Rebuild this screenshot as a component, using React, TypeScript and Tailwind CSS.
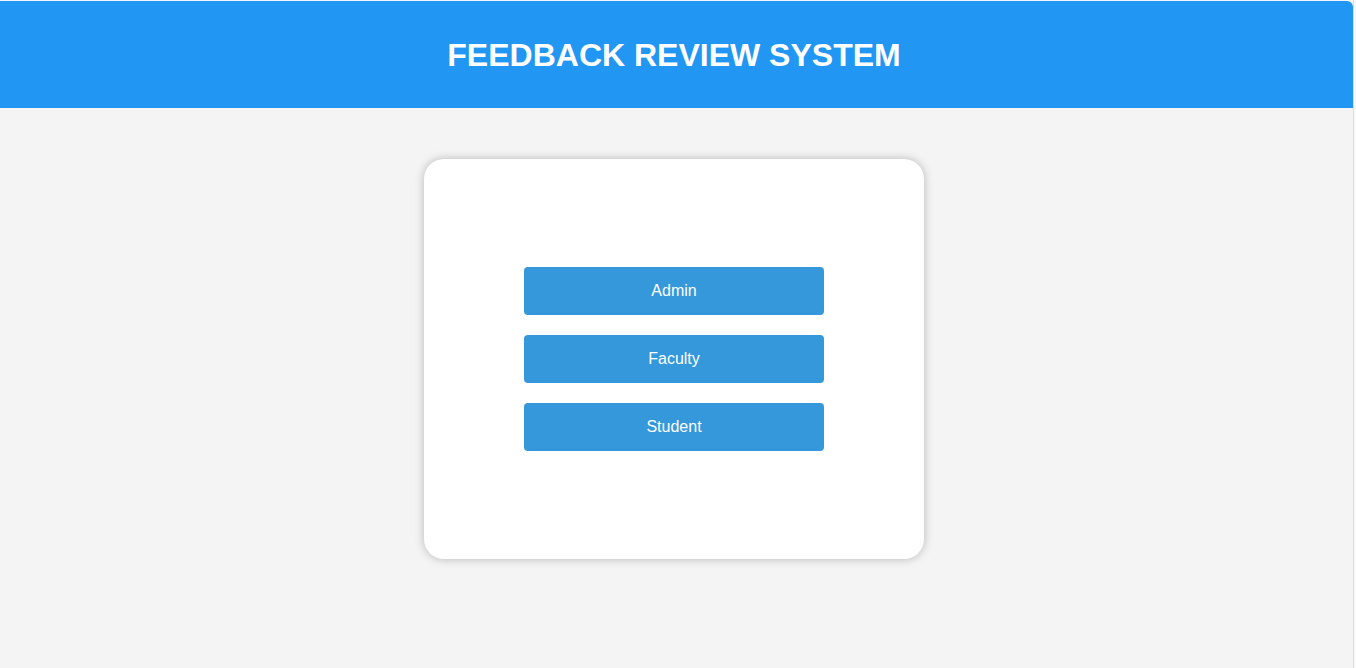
import React from 'react';

const roles = ['Admin', 'Faculty', 'Student'];

export default function App() {
    return (
        <div className="flex h-screen w-full bg-[#f4f4f4] font-['Liberation_Sans',Arial,sans-serif]">
            <div className="flex flex-1 flex-col">
                <header className="mt-px flex h-[107px] items-center justify-center rounded-tr-[6px] bg-[#2196f3] pr-[5px]">
                    <h1 className="text-[32px] font-bold text-white">FEEDBACK REVIEW SYSTEM</h1>
                </header>
                <main className="flex justify-center pt-[51px] pr-[5px]">
                    <div className="flex h-[400px] w-[500px] flex-col items-center justify-center gap-5 rounded-[20px] bg-white shadow-[0_0_10px_rgba(0,0,0,0.25)]">
                        {roles.map(role => (
                            <button
                                key={role}
                                className="h-12 w-[300px] rounded-[4px] bg-[#3498db] text-base text-white"
                            >
                                {role}
                            </button>
                        ))}
                    </div>
                </main>
            </div>
            <div className="w-[3px] border-l border-[#dcdcdc] bg-[#f9f9f9]" />
        </div>
    );
}
